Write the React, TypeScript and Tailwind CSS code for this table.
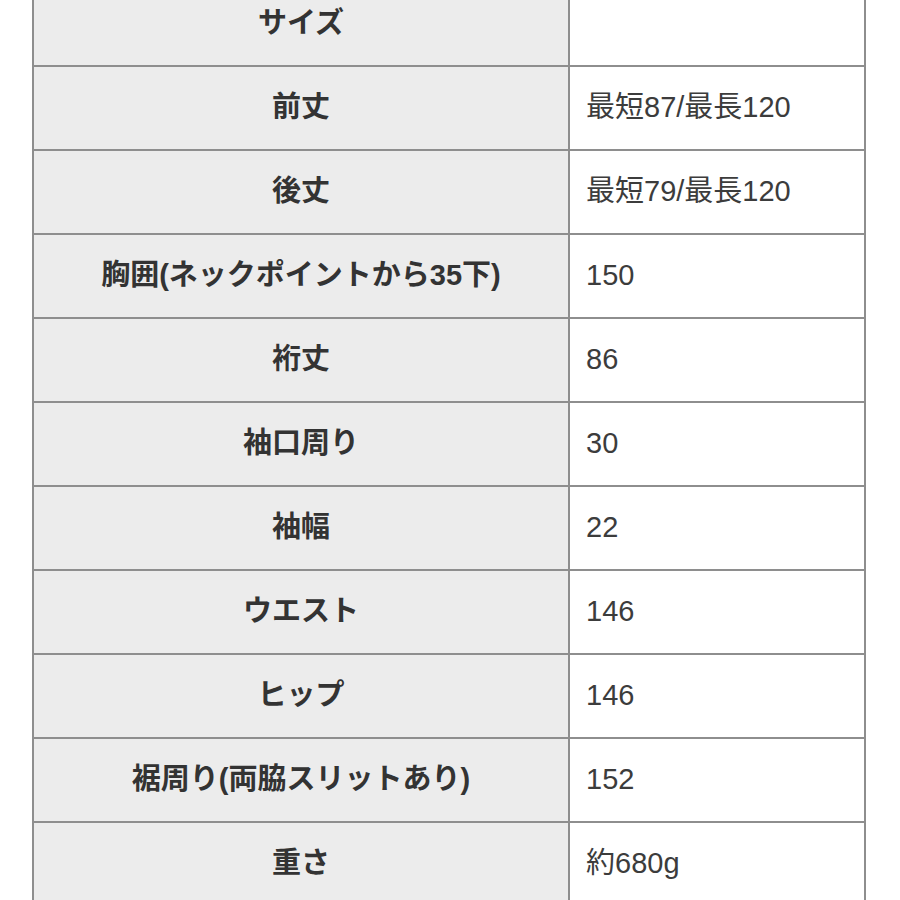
const ROWS: [string, string][] = [
  ["サイズ", ""],
  ["前丈", "最短87/最長120"],
  ["後丈", "最短79/最長120"],
  ["胸囲(ネックポイントから35下)", "150"],
  ["裄丈", "86"],
  ["袖口周り", "30"],
  ["袖幅", "22"],
  ["ウエスト", "146"],
  ["ヒップ", "146"],
  ["裾周り(両脇スリットあり)", "152"],
  ["重さ", "約680g"],
];

export default function App() {
  return (
    <div
      className="w-[900px] h-[900px] overflow-hidden bg-white"
      style={{ fontFamily: '"Liberation Sans", "Noto Sans CJK JP", sans-serif' }}
    >
      <div className="-mt-[17px] ml-[32px] w-[834px] border-x-2 border-[#8e8e8e]">
        {ROWS.map(([label, value], i) => (
          <div
            key={i}
            className="grid grid-cols-[536px_1fr] h-[84px] border-b-2 border-[#8e8e8e]"
          >
            <div className="flex items-center justify-center bg-[#ececec] border-r-2 border-[#8e8e8e] text-[29px] font-bold text-[#333]">
              {label}
            </div>
            <div className="flex items-center pl-[16px] bg-white text-[29px] text-[#3c3c3c]">
              {value}
            </div>
          </div>
        ))}
      </div>
    </div>
  );
}
